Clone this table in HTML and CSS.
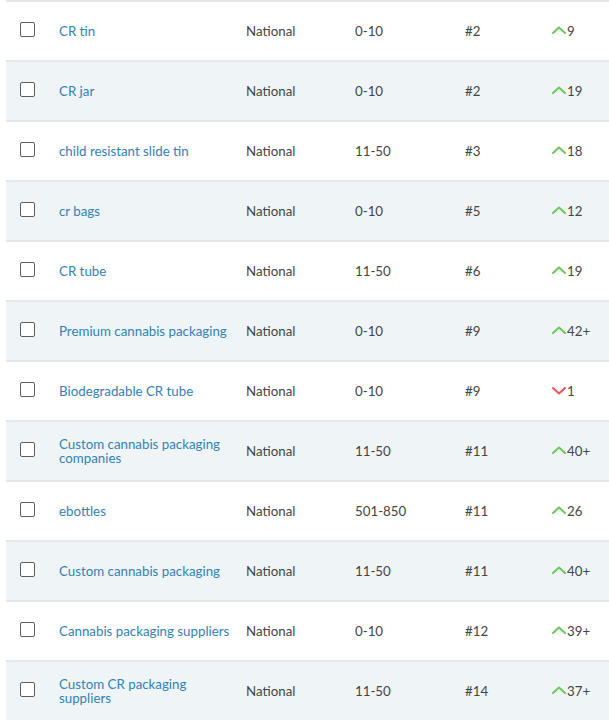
FILE: index.html
```html
<!DOCTYPE html>
<html>
<head>
<meta charset="utf-8">
<link rel="stylesheet" href="styles.css">
</head>
<body>
<div class="table">
  <div class="row">
    <div class="cell check"><span class="box"></span></div>
    <div class="cell kw"><a>CR tin</a></div>
    <div class="cell loc">National</div>
    <div class="cell vol">0-10</div>
    <div class="cell rank">#2</div>
    <div class="cell chg"><svg class="up" viewBox="0 0 14 8"><path d="M1 7 L7 1.5 L13 7"/></svg>9</div>
  </div>
  <div class="row alt">
    <div class="cell check"><span class="box"></span></div>
    <div class="cell kw"><a>CR jar</a></div>
    <div class="cell loc">National</div>
    <div class="cell vol">0-10</div>
    <div class="cell rank">#2</div>
    <div class="cell chg"><svg class="up" viewBox="0 0 14 8"><path d="M1 7 L7 1.5 L13 7"/></svg>19</div>
  </div>
  <div class="row">
    <div class="cell check"><span class="box"></span></div>
    <div class="cell kw"><a>child resistant slide tin</a></div>
    <div class="cell loc">National</div>
    <div class="cell vol">11-50</div>
    <div class="cell rank">#3</div>
    <div class="cell chg"><svg class="up" viewBox="0 0 14 8"><path d="M1 7 L7 1.5 L13 7"/></svg>18</div>
  </div>
  <div class="row alt">
    <div class="cell check"><span class="box"></span></div>
    <div class="cell kw"><a>cr bags</a></div>
    <div class="cell loc">National</div>
    <div class="cell vol">0-10</div>
    <div class="cell rank">#5</div>
    <div class="cell chg"><svg class="up" viewBox="0 0 14 8"><path d="M1 7 L7 1.5 L13 7"/></svg>12</div>
  </div>
  <div class="row">
    <div class="cell check"><span class="box"></span></div>
    <div class="cell kw"><a>CR tube</a></div>
    <div class="cell loc">National</div>
    <div class="cell vol">11-50</div>
    <div class="cell rank">#6</div>
    <div class="cell chg"><svg class="up" viewBox="0 0 14 8"><path d="M1 7 L7 1.5 L13 7"/></svg>19</div>
  </div>
  <div class="row alt">
    <div class="cell check"><span class="box"></span></div>
    <div class="cell kw"><a>Premium cannabis packaging</a></div>
    <div class="cell loc">National</div>
    <div class="cell vol">0-10</div>
    <div class="cell rank">#9</div>
    <div class="cell chg"><svg class="up" viewBox="0 0 14 8"><path d="M1 7 L7 1.5 L13 7"/></svg>42+</div>
  </div>
  <div class="row">
    <div class="cell check"><span class="box"></span></div>
    <div class="cell kw"><a>Biodegradable CR tube</a></div>
    <div class="cell loc">National</div>
    <div class="cell vol">0-10</div>
    <div class="cell rank">#9</div>
    <div class="cell chg"><svg class="down" viewBox="0 0 14 8"><path d="M1 1 L7 6.5 L13 1"/></svg>1</div>
  </div>
  <div class="row alt">
    <div class="cell check"><span class="box"></span></div>
    <div class="cell kw"><a>Custom cannabis packaging companies</a></div>
    <div class="cell loc">National</div>
    <div class="cell vol">11-50</div>
    <div class="cell rank">#11</div>
    <div class="cell chg"><svg class="up" viewBox="0 0 14 8"><path d="M1 7 L7 1.5 L13 7"/></svg>40+</div>
  </div>
  <div class="row">
    <div class="cell check"><span class="box"></span></div>
    <div class="cell kw"><a>ebottles</a></div>
    <div class="cell loc">National</div>
    <div class="cell vol">501-850</div>
    <div class="cell rank">#11</div>
    <div class="cell chg"><svg class="up" viewBox="0 0 14 8"><path d="M1 7 L7 1.5 L13 7"/></svg>26</div>
  </div>
  <div class="row alt">
    <div class="cell check"><span class="box"></span></div>
    <div class="cell kw"><a>Custom cannabis packaging</a></div>
    <div class="cell loc">National</div>
    <div class="cell vol">11-50</div>
    <div class="cell rank">#11</div>
    <div class="cell chg"><svg class="up" viewBox="0 0 14 8"><path d="M1 7 L7 1.5 L13 7"/></svg>40+</div>
  </div>
  <div class="row">
    <div class="cell check"><span class="box"></span></div>
    <div class="cell kw"><a>Cannabis packaging suppliers</a></div>
    <div class="cell loc">National</div>
    <div class="cell vol">0-10</div>
    <div class="cell rank">#12</div>
    <div class="cell chg"><svg class="up" viewBox="0 0 14 8"><path d="M1 7 L7 1.5 L13 7"/></svg>39+</div>
  </div>
  <div class="row alt">
    <div class="cell check"><span class="box"></span></div>
    <div class="cell kw"><a>Custom CR packaging suppliers</a></div>
    <div class="cell loc">National</div>
    <div class="cell vol">11-50</div>
    <div class="cell rank">#14</div>
    <div class="cell chg"><svg class="up" viewBox="0 0 14 8"><path d="M1 7 L7 1.5 L13 7"/></svg>37+</div>
  </div>
</div>
</body>
</html>
```
FILE: styles.css
```css
html, body {
  margin: 0;
  padding: 0;
  background: #ffffff;
}
body {
  font-family: Lato, "Liberation Sans", sans-serif;
  font-size: 13.3px;
  color: #444444;
  overflow: hidden;
}
.table {
  margin-left: 6px;
}
.row {
  display: grid;
  grid-template-columns: 53px 187px 109px 110px 87px 1fr;
  height: 58px;
  border-top: 2px solid #e4e7e9;
  align-items: center;
  background: #ffffff;
}
.row.alt {
  background: #eff5f6;
}
.cell {
  line-height: 14px;
}
.check {
  padding-left: 14px;
  display: flex;
  align-items: center;
}
.box {
  display: block;
  width: 13px;
  height: 13px;
  border: 1px solid #5e5e5e;
  border-radius: 2px;
  background: #fff;
  margin-top: -3px;
}
.kw {
  padding-right: 10px;
}
.kw a {
  color: #3381b6;
  text-decoration: none;
}
.chg {
  display: flex;
  align-items: center;
}
.chg svg {
  width: 14px;
  height: 8px;
  margin-right: 1px;
  fill: none;
  stroke-width: 2;
  stroke-linecap: round;
  stroke-linejoin: round;
}
.up {
  stroke: #6cc65a;
  margin-top: -3px;
}
.down {
  stroke: #e8545a;
  margin-top: -1px;
}
```
